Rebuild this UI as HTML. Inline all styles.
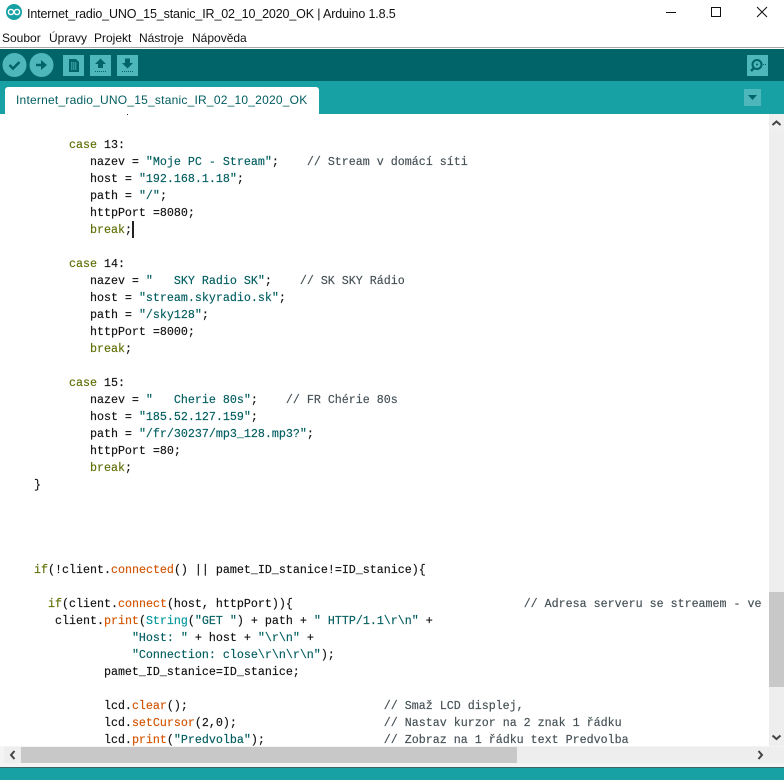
<!DOCTYPE html>
<html><head><meta charset="utf-8">
<style>
html,body{margin:0;padding:0;background:#fff}
body{width:784px;height:780px;position:relative;overflow:hidden;font-family:"Liberation Sans",sans-serif}
.a{position:absolute}
.t{position:absolute;white-space:pre;color:#111}
pre{position:absolute;margin:0;left:34px;top:137px;font:11.67px/17px "Liberation Mono",monospace;color:#111;width:735px;height:609px;overflow:hidden;-webkit-text-stroke:.15px}
.k{color:#5e6d03}.f{color:#d35400}.s{color:#005c5f}.c{color:#434f54}.y{color:#00979c}
</style></head><body>
<svg class="a" style="left:6px;top:4px" width="16" height="16" viewBox="0 0 16 16"><circle cx="8" cy="8" r="8" fill="#17a1a5"/><circle cx="5" cy="8" r="2.6" fill="none" stroke="#fff" stroke-width="1.4"/><circle cx="11" cy="8" r="2.6" fill="none" stroke="#fff" stroke-width="1.4"/></svg>
<div class="t" style="left:27px;top:6px;font-size:12.5px;line-height:16px;letter-spacing:-.14px">Internet_radio_UNO_15_stanic_IR_02_10_2020_OK | Arduino 1.8.5</div>
<svg class="a" style="left:660px;top:0" width="124" height="28" viewBox="0 0 124 28" fill="none" stroke="#111"><path d="M6 12.500H16"/><rect x="51.500" y="7.500" width="9" height="9"/><path d="M97 7L107 17M107 7L97 17"/></svg>
<div class="t" style="left:2px;top:30px;font-size:12px;line-height:16px">Soubor</div>
<div class="t" style="left:49px;top:30px;font-size:12px;line-height:16px">Úpravy</div>
<div class="t" style="left:94px;top:30px;font-size:12px;line-height:16px">Projekt</div>
<div class="t" style="left:139px;top:30px;font-size:12px;line-height:16px">Nástroje</div>
<div class="t" style="left:192px;top:30px;font-size:12px;line-height:16px">Nápověda</div>
<div class="a" style="left:0;top:47px;width:784px;height:1px;background:#a8a8a8"></div>
<div class="a" style="left:0;top:49px;width:784px;height:32px;background:#006468"></div>
<div class="a" style="left:0;top:81px;width:784px;height:33px;background:#17a1a5"></div>
<svg class="a" style="left:0;top:49px" width="150" height="32" viewBox="0 0 150 32">
<circle cx="14.500" cy="16" r="12" fill="#4db7bb"/><path d="M9.500 16L13 19.500L19.500 13" fill="none" stroke="#006468" stroke-width="2.600"/>
<circle cx="41.500" cy="16" r="12" fill="#4db7bb"/><path d="M36 14.700H41V11L47 16L41 21V17.300H36Z" fill="#006468"/>
<rect x="63" y="6" width="21" height="21" fill="#4db7bb"/><path d="M69 10H76L79 13V23H69Z" fill="#006468"/><path d="M71 14H77M71 16H77M71 18H77M71 20H77M71.500 13V21M73.500 13V21M75.500 13V21" stroke="#4db7bb" stroke-width=".5"/>
<rect x="90" y="6" width="21" height="21" fill="#4db7bb"/><path d="M100.500 9.500L106 15H103V19H98V15H95Z" fill="#006468"/><path d="M95 22.500H106" stroke="#006468" stroke-dasharray="1 1"/>
<rect x="117" y="6" width="21" height="21" fill="#4db7bb"/><path d="M125 9.500H130V14H133L127.500 19.500L122 14H125Z" fill="#006468"/><path d="M122 22.500H133" stroke="#006468" stroke-dasharray="1 1"/>
</svg>
<svg class="a" style="left:747px;top:55px" width="21" height="21" viewBox="0 0 21 21"><rect width="21" height="21" fill="#4db7bb"/><circle cx="10" cy="9.500" r="4.500" fill="none" stroke="#006468" stroke-width="2"/><circle cx="10" cy="9.500" r="1" fill="#006468"/><path d="M7 13L4 16" stroke="#006468" stroke-width="2.500"/><path d="M16 9.500H19" stroke="#006468" stroke-dasharray="1 1"/></svg>
<svg class="a" style="left:744px;top:89px" width="17" height="17" viewBox="0 0 17 17"><rect width="17" height="17" fill="#4db7bb"/><path d="M4 6H13L8.500 11Z" fill="#006468"/></svg>
<div class="a" style="left:5px;top:87px;width:314px;height:27px;background:#fff;border-radius:3px 3px 0 0"></div>
<div class="t" style="left:16px;top:92px;font-size:12px;line-height:16px;letter-spacing:.22px;color:#005c5f">Internet_radio_UNO_15_stanic_IR_02_10_2020_OK</div>
<div class="a" style="left:127px;top:114px;width:1px;height:1px;background:#222"></div>
<pre>     <span class="k">case</span> 13:
        nazev = <span class="s">"Moje PC - Stream"</span>;    <span class="c">// Stream v domácí síti</span>
        host = <span class="s">"192.168.1.18"</span>;
        path = <span class="s">"/"</span>;
        httpPort =8080;
        <span class="k">break</span>;

     <span class="k">case</span> 14:
        nazev = <span class="s">"   SKY Radio SK"</span>;    <span class="c">// SK SKY Rádio</span>
        host = <span class="s">"stream.skyradio.sk"</span>;
        path = <span class="s">"/sky128"</span>;
        httpPort =8000;
        <span class="k">break</span>;

     <span class="k">case</span> 15:
        nazev = <span class="s">"   Cherie 80s"</span>;    <span class="c">// FR Chérie 80s</span>
        host = <span class="s">"185.52.127.159"</span>;
        path = <span class="s">"/fr/30237/mp3_128.mp3?"</span>;
        httpPort =80;
        <span class="k">break</span>;
}




<span class="k">if</span>(!client.<span class="f">connected</span>() || pamet_ID_stanice!=ID_stanice){

  <span class="k">if</span>(client.<span class="f">connect</span>(host, httpPort)){                                 <span class="c">// Adresa serveru se streamem - ve</span>
   client.<span class="f">print</span>(<span class="y">String</span>(<span class="s">"GET "</span>) + path + <span class="s">" HTTP/1.1\r\n"</span> +
              <span class="s">"Host: "</span> + host + <span class="s">"\r\n"</span> +
              <span class="s">"Connection: close\r\n\r\n"</span>);
          pamet_ID_stanice=ID_stanice;

          lcd.<span class="f">clear</span>();                            <span class="c">// Smaž LCD displej,</span>
          lcd.<span class="f">setCursor</span>(2,0);                     <span class="c">// Nastav kurzor na 2 znak 1 řádku</span>
          lcd.<span class="f">print</span>(<span class="s">"Predvolba"</span>);                 <span class="c">// Zobraz na 1 řádku text Predvolba</span></pre>
<div class="a" style="left:132px;top:221px;width:2px;height:17px;background:#222"></div>
<div class="a" style="left:769px;top:114px;width:15px;height:633px;background:#eee"></div>
<div class="a" style="left:769px;top:592px;width:15px;height:95px;background:#c8c8c8"></div>
<div class="a" style="left:769px;top:114px;width:15px;height:17px;background:#f0f0f0"></div>
<svg class="a" style="left:769px;top:115px" width="15" height="17" viewBox="0 0 15 17"><path d="M3.500 10L7.500 6.500L11.500 10" fill="none" stroke="#444" stroke-width="2"/></svg>
<svg class="a" style="left:769px;top:730px" width="15" height="17" viewBox="0 0 15 17"><path d="M3.500 5.500L7.500 9L11.500 5.500" fill="none" stroke="#444" stroke-width="2"/></svg>
<div class="a" style="left:0;top:746px;width:784px;height:21px;background:#f4f4f4"></div>
<div class="a" style="left:4px;top:747px;width:780px;height:16px;background:#eee"></div>
<div class="a" style="left:21px;top:747px;width:496px;height:16px;background:#c8c8c8"></div>
<svg class="a" style="left:4px;top:747px" width="17" height="16" viewBox="0 0 17 16"><path d="M10.500 4L7 8L10.500 12" fill="none" stroke="#444" stroke-width="2"/></svg>
<svg class="a" style="left:752px;top:747px" width="17" height="16" viewBox="0 0 17 16"><path d="M6.500 4L10 8L6.500 12" fill="none" stroke="#444" stroke-width="2"/></svg>
<div class="a" style="left:0;top:767px;width:784px;height:1px;background:#3c6466"></div>
<div class="a" style="left:0;top:768px;width:784px;height:12px;background:#17a1a5"></div>
</body></html>
